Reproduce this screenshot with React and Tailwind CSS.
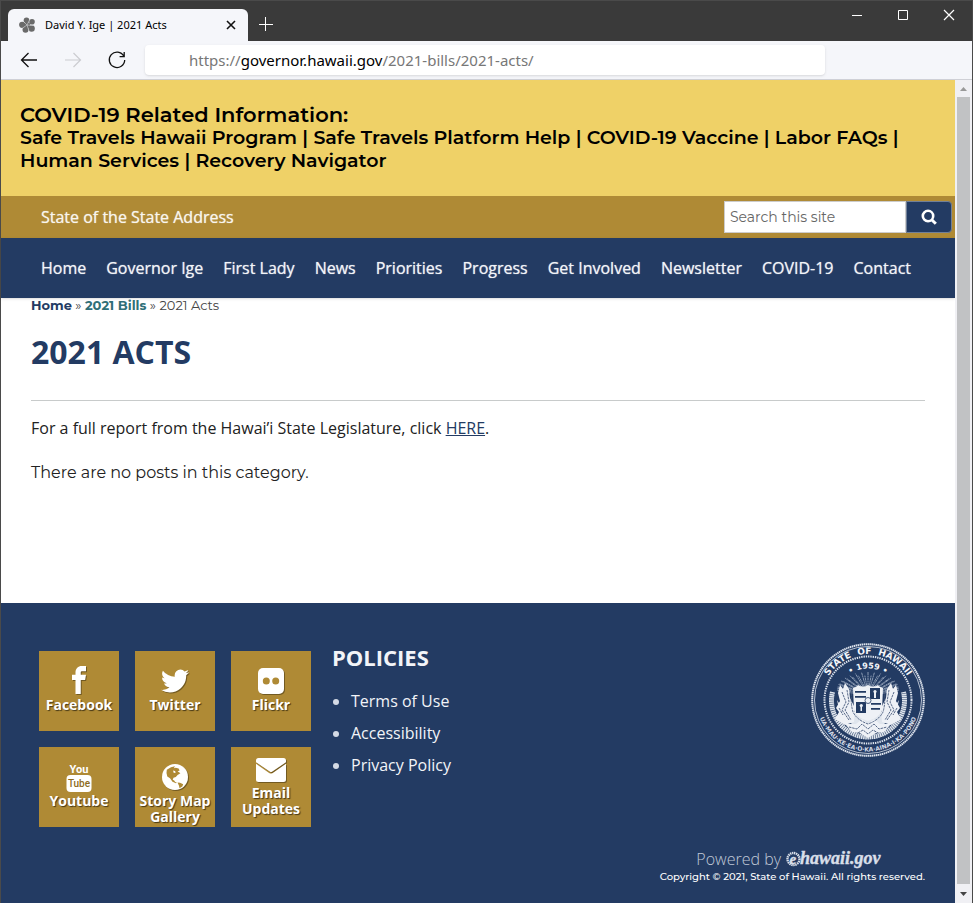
import React from "react";
import { ImFacebook } from "react-icons/im";

const navItems = ["Home", "Governor Ige", "First Lady", "News", "Priorities", "Progress", "Get Involved", "Newsletter", "COVID-19", "Contact"];
const covidLinks = ["Safe Travels Hawaii Program", "Safe Travels Platform Help", "COVID-19 Vaccine", "Labor FAQs", "Human Services", "Recovery Navigator"];
const policies = ["Terms of Use", "Accessibility", "Privacy Policy"];

function Hibiscus() {
  return (
    <svg viewBox="0 0 16 16" className="h-4 w-4 shrink-0 fill-[#6a6a6a]" aria-hidden="true">
      <circle cx="7.500" cy="3.300" r="2.800" />
      <circle cx="13" cy="4.800" r="2.800" />
      <circle cx="12.600" cy="11.500" r="3.200" />
      <circle cx="6.500" cy="12.800" r="3" />
      <circle cx="3.200" cy="7.800" r="3.100" />
      <circle cx="8.300" cy="8.200" r="3" />
      <path d="M8 8L3 11.500M8 8L10 14M8 8L14 8.500M8 8L10.500 3M8 8L4 4" stroke="#d5d6da" strokeWidth=".6" />
    </svg>
  );
}

function Chrome() {
  return (
    <header className="font-['Noto_Sans',sans-serif]">
      <div className="flex h-10 items-start bg-[#3a3a3a]">
        <div className="ml-[7px] mt-2 flex h-8 w-60 items-center rounded-t-md bg-[#f5f6fa] pl-[11px] pr-[11px] text-[11px] text-black">
          <Hibiscus />
          <span className="ml-[10px] grow whitespace-nowrap">David Y. Ige | 2021 Acts</span>
          <button aria-label="Close tab" className="flex h-3 w-3 items-center justify-center">
            <svg viewBox="0 0 10 10" className="h-[10px] w-[10px]" stroke="#111" strokeWidth="1.600"><path d="M1 1l8 8M9 1L1 9" /></svg>
          </button>
        </div>
        <button aria-label="New tab" className="ml-[10px] mt-[15px]">
          <svg viewBox="0 0 16 16" className="h-4 w-4" stroke="#fff"><path d="M7.500 1v14M1 8.500h14" /></svg>
        </button>
        <div className="ml-auto mr-[17px] mt-2 flex gap-[34px]">
          <button aria-label="Minimize"><svg viewBox="0 0 12 12" className="h-3 w-3" stroke="#fff"><path d="M1 6.500h10" /></svg></button>
          <button aria-label="Maximize"><svg viewBox="0 0 12 12" className="h-3 w-3" stroke="#fff" fill="none"><path d="M1.500 1.500h9v9h-9z" /></svg></button>
          <button aria-label="Close window"><svg viewBox="0 0 12 12" className="h-3 w-3" stroke="#fff" strokeWidth="1.200"><path d="M1 1l10 10M11 1L1 11" /></svg></button>
        </div>
      </div>
      <div className="flex h-[39px] items-center border-b border-[#cfd0d6] bg-[#f5f6fa]">
        <div className="flex w-36 shrink-0 items-center gap-6 pl-[18px]">
          <button aria-label="Back"><svg viewBox="0 0 20 20" className="h-5 w-5" fill="none" stroke="#111" strokeWidth="1.300"><path d="M18 10H2.500M9.500 3L2.500 10l7 7" /></svg></button>
          <button aria-label="Forward"><svg viewBox="0 0 20 20" className="h-5 w-5" fill="none" stroke="#cbccd0" strokeWidth="1.200"><path d="M2 10h15.500M10.500 3l7 7-7 7" /></svg></button>
          <button aria-label="Reload"><svg viewBox="0 0 20 20" className="h-5 w-5" fill="none" stroke="#111" strokeWidth="1.300"><path d="M16.800 6.200A7.700 7.700 0 1 0 17.700 10M17.200 2v4.600h-4.600" /></svg></button>
        </div>
        <a href="#" aria-label="Address" className="flex h-[30px] w-[680px] items-center rounded bg-white pl-11 text-[15px] text-[#777] shadow-sm">
          <span className="whitespace-nowrap">https://<span className="text-black">governor.hawaii.gov</span>/2021-bills/2021-acts/</span>
        </a>
      </div>
    </header>
  );
}

const twitterPath = "M1684 408q-67 98-162 167 1 14 1 42 0 130-38 259.500t-115.500 248.500-184.500 210.500-258 146-323 54.500q-271 0-496-145 35 4 78 4 225 0 401-138-105-2-188-64.500t-114-159.500q33 5 61 5 43 0 85-11-112-23-185.500-111.500t-73.500-205.500v-4q68 38 146 41-66-44-105-115t-39-154q0-88 44-163 121 149 294.500 238.500t371.500 99.500q-8-38-8-74 0-134 94.500-228.500t228.500-94.500q140 0 236 102 109-21 205-78-37 115-142 178 93-10 186-50z";

function TwitterIcon() {
  return (
    <svg viewBox="0 0 1792 1792" className="h-8 w-8 fill-white drop-shadow-[1px_1px_0_rgba(0,0,0,0.35)]" aria-hidden="true"><path d={twitterPath} /></svg>
  );
}

function FacebookIcon() {
  return (
    <span className="flex h-8 w-8 items-end justify-center pb-[3px]">
      <ImFacebook className="h-7 w-7 drop-shadow-[1px_1px_0_rgba(0,0,0,0.35)]" aria-hidden="true" />
    </span>
  );
}

function FlickrIcon() {
  return (
    <svg viewBox="0 0 32 32" className="h-8 w-8 drop-shadow-[1px_1px_0_rgba(0,0,0,0.35)]" aria-hidden="true">
      <rect x="3" y="3" width="26" height="26" rx="5" fill="#fff" />
      <circle cx="11.300" cy="16" r="3.500" fill="#af8a35" /><circle cx="20.700" cy="16" r="3.500" fill="#af8a35" />
    </svg>
  );
}

function YoutubeIcon() {
  return (
    <svg viewBox="0 0 32 32" className="h-8 w-8 [text-shadow:none]" fontFamily="Roboto, sans-serif" aria-hidden="true">
      <text x="16" y="12" textAnchor="middle" fontSize="11" fontWeight="700" fill="#fff">You</text>
      <rect x="3.500" y="14" width="25" height="17" rx="4" fill="#fff" />
      <text x="16" y="26" textAnchor="middle" fontSize="10" fontWeight="500" fill="#8d6b22">Tube</text>
    </svg>
  );
}

function GlobeIcon() {
  return (
    <span className="flex h-8 w-8 items-end justify-center pb-[3px]">
      <svg viewBox="0 0 26 26" className="h-[26px] w-[26px] drop-shadow-[1px_1px_0_rgba(0,0,0,0.35)]" aria-hidden="true">
        <circle cx="13" cy="13" r="13" fill="#fff" />
        <g fill="#af8a35">
          <path d="M4.800 5.800L9 3.200l4-1-1.200 2 2-.4 2.800.7 1 2-2 .8 2.800 1.900-2.800 1.800-1.800 2-2.300.8-.8 2 1.500.6 1 1.500 1.600.6-.8.800-3.500-1.500-2.500-3.500-2.700-1.800L4.500 9z" />
          <path d="M15.500 18.600l2.500.2 3.200 1.500-.9 2.200-2.800 1.800-.5-2.500z" />
        </g>
        <path d="M11 6.500l2 .5.800 1.500-2 .5z" fill="#fff" />
      </svg>
    </span>
  );
}

function MailIcon() {
  return (
    <svg viewBox="0 0 32 32" className="h-8 w-8 fill-white drop-shadow-[1px_1px_0_rgba(0,0,0,0.35)]" aria-hidden="true">
      <path d="M3.500 5h25Q31 5 31 7.500v1.700L17 18.700q-1 .8-2 0L1 9.200v-1.700Q1 5 3.500 5z" />
      <path d="M1 10.700l13.200 9.300q1.800 1.200 3.600 0L31 10.700V26.500q0 2.500-2.500 2.500h-25Q1 29 1 26.500z" />
    </svg>
  );
}

function Tile({ icon, lines, pad }) {
  return (
    <a href="#" className={`${pad} flex h-20 w-20 flex-col items-center bg-[#af8a35] text-center text-sm leading-4 font-bold text-white [text-shadow:1px_1px_1px_rgba(0,0,0,0.6)]`}>
      {icon}
      {lines.map((l) => <span key={l} className="whitespace-nowrap">{l}</span>)}
    </a>
  );
}

/* Rays, shield and supporters of the state seal, with its two rings of lettering. */
function Seal() {
  const rays = Array.from({ length: 31 }, (_, i) => Math.PI + (i * Math.PI) / 30);
  return (
    <svg viewBox="1 1 114 114" className="h-[114px] w-[114px] shrink-0" role="img" aria-label="State of Hawaii seal">
      <defs>
        <path id="sealTop" d="M12 58a46 46 0 0 1 92 0" />
        <path id="sealYear" d="M26.500 58a31.500 31.500 0 0 1 63 0" />
        <path id="sealBottom" d="M6.500 58a51.500 51.500 0 0 0 103 0" />
      </defs>
      <g fill="none" stroke="#dde3ed">
        <circle cx="58" cy="58" r="55.800" strokeWidth="2" strokeDasharray="1.500 .5" />
        <circle cx="58" cy="58" r="53.500" strokeWidth=".8" />
        <circle cx="58" cy="58" r="43.500" strokeWidth="2" strokeDasharray="1.400 .9" />
      </g>
      <g fill="#f4f6fa" fontFamily="DejaVu Sans, sans-serif" fontWeight="bold" textAnchor="middle">
        <text fontSize="9" className="whitespace-pre"><textPath href="#sealTop" startOffset="50%">STATE  OF  HAWAII</textPath></text>
        <text fontSize="8"><textPath href="#sealYear" startOffset="50%">• 1959 •</textPath></text>
        <text fontSize="6" fill="#d3dae6"><textPath href="#sealBottom" startOffset="50%">UA·MAU·KE·EA·O·KA·AINA·I·KA·PONO</textPath></text>
      </g>
      <g stroke="#b9c4d6" strokeWidth=".7" strokeDasharray="3 .5 1.500 .5">
        {rays.map((a, i) => <path key={i} d={`M${58 + 12 * Math.cos(a)} ${52 + 8 * Math.sin(a)}L${58 + 31 * Math.cos(a)} ${48 + (i % 2 ? 18 : 15) * Math.sin(a)}`} />)}
      </g>
      <path d="M22.500 50a36.500 36.500 0 1 0 71 0" fill="none" stroke="#dfe5ed" strokeWidth="5" strokeDasharray="1.600 .5" />
      <path d="M27 58q2 14 12 22 9 7 19 7t19-7q10-8 12-22l-8 12H35z" fill="#dfe5ed" />
      <g fill="#eef1f6">
        <path d="M30 43l3 4 2-6 4 6 1 9 5 10-1 14-9 3-10-6 4-7-3-4 4-7-2-8zM86 43l-3 4-2-6-4 6-1 9-5 10 1 14 9 3 10-6-4-7 3-4-4-7 2-8z" />
        <path d="M43 46q4-1 5-3 5 3 10 0 5 3 10 0 1 2 5 3l-1 22q-3 8-14 11-11-3-14-11z" />
        <path d="M35 82l11 0 6-5 6 5 6-5 6 5h11l-7 8-8 1-8 5-8-5-8-1z" />
      </g>
      <g fill="#233b63">
        <path d="M60 46h10v11H60zM46 60h10v11H46z" />
        <path d="M45 49h11v1.800H45zM45 54h11v1.800H45zM61 61h10v1.800H61zM61 66h9v1.800h-9z" />
      </g>
      <g fill="#eef1f6"><path d="M64 49h2v7h-2zM50.500 63h1.500v6h-1.500z" /><circle cx="65" cy="49.500" r="1.600" /><circle cx="51.300" cy="63.500" r="1.600" /><circle cx="58" cy="58.500" r="3" stroke="#233b63" strokeWidth=".8" /></g>
      <g stroke="#46597c" strokeWidth=".9" fill="none" strokeDasharray="2.500 .8">
        <path d="M32 50l4 10-4 8 7 10M37 48l2 12-4 8 6 10M84 50l-4 10 4 8-7 10M79 48l-2 12 4 8-6 10M42 48q-2 12 1 22 4 8 15 12 11-4 15-12 3-10 1-22M39 85l8 2 5-5 6 5 6-5 5 5 8-2M48 91l5-3 5 4 5-4 5 3M29 66l4 7M87 66l-4 7" />
      </g>
    </svg>
  );
}

function EHawaii() {
  return (
    <svg viewBox="0 0 98 22" className="h-[22px] w-[98px]" fill="#d9dfe9" role="img" aria-label="ehawaii.gov" fontFamily="Liberation Serif, serif" fontStyle="italic" fontWeight="bold">
      <circle cx="8.500" cy="11" r="6" fill="none" stroke="#d9dfe9" strokeWidth="2.400" strokeDasharray="1.400 .6" />
      <text x="4.500" y="15.500" fontSize="15" stroke="#d9dfe9" strokeWidth=".5">e</text>
      <text x="15" y="16" fontSize="18" stroke="#d9dfe9" strokeWidth=".4">hawaii.gov</text>
    </svg>
  );
}

function Scrollbar() {
  return (
    <div className="flex w-[17px] shrink-0 flex-col items-center bg-[#f0f0f4]" aria-hidden="true">
      <svg viewBox="0 0 17 17" className="h-[17px] w-[17px] shrink-0"><path d="M5 11h7L8.500 7z" fill="#999" /></svg>
      <div className="w-[13px] grow bg-[#c1c2c4]" />
      <svg viewBox="0 0 17 17" className="h-[19px] w-[17px] shrink-0"><path d="M5 7h7l-3.500 4z" fill="#444" /></svg>
    </div>
  );
}

export default function App() {
  return (
    <div className="flex min-h-screen flex-col border-x border-t border-[#4a4a4a] bg-white font-['Open_Sans',sans-serif]">
      <Chrome />
      <div className="flex grow">
        <div className="flex min-w-0 grow flex-col">
          <section className="bg-[#efd167] px-[19px] pt-6 pb-6 font-['Montserrat','Inter',sans-serif] font-semibold text-black">
            <h2 className="text-[21px] leading-[22px]">COVID-19 Related Information:</h2>
            <p className="text-[19px] leading-[23px]">
              {covidLinks.map((l, i) => (
                <React.Fragment key={l}>{i > 0 && " | "}<a href="#">{l}</a></React.Fragment>
              ))}
            </p>
          </section>
          <div className="flex h-[42px] items-center justify-between bg-[#af8a35] pl-10 pr-[3px]">
            <a href="#" className="text-base text-[#f8f5ee] [text-shadow:0_0_1px_rgba(255,255,255,0.7)]">State of the State Address</a>
            <form className="flex h-8">
              <input aria-label="Search this site" placeholder="Search this site" className="w-[182px] border border-[#ccc] bg-white px-[5px] font-['Montserrat','Inter',sans-serif] text-sm placeholder:text-[#666]" />
              <button type="button" aria-label="Search" className="flex w-[46px] items-center justify-center rounded-r-sm border border-[#718098] bg-[#233b63]">
                <svg viewBox="0 0 16 16" className="h-4 w-4" fill="none" stroke="#fff" strokeWidth="2.600"><circle cx="7" cy="7" r="5.200" /><path d="M10.500 10.500l4.300 4.300" strokeWidth="3" /></svg>
              </button>
            </form>
          </div>
          <nav className="flex h-[60px] items-center gap-5 bg-[#233b63] pl-10 text-base whitespace-nowrap text-[#f2f4f8] shadow [text-shadow:0_0_1px_rgba(255,255,255,0.7)]">
            {navItems.map((n) => <a key={n} href="#">{n}</a>)}
          </nav>
          <main className="grow px-[30px] text-[#222]">
            <p className="font-['Montserrat','Inter',sans-serif] text-[13px] leading-[14px] text-[#444]">
              <a href="#" className="font-bold text-[#233b63]">Home</a> » <a href="#" className="font-bold text-[#2f6f78]">2021 Bills</a> » 2021 Acts
            </p>
            <h1 className="mt-[18px] text-[32px] leading-[44px] font-bold text-[#233b63]">2021 ACTS</h1>
            <hr className="mt-[26px] border-[#c8cbcb]" />
            <p className="mt-4 text-base leading-[22px]">For a full report from the Hawai’i State Legislature, click <a href="#" className="text-[#233b63] underline">HERE</a>.</p>
            <p className="mt-[22px] font-['Montserrat','Inter',sans-serif] text-base leading-6">There are no posts in this category.</p>
          </main>
          <footer className="flex h-[300px] flex-col justify-between bg-[#233b63] pr-[30px] pb-[19px] pl-[38px] text-[#f2f4f8]">
            <div className="flex items-start">
              <div className="mt-12 grid shrink-0 grid-cols-3 gap-4">
                <Tile pad="pt-[14px]" icon={<FacebookIcon />} lines={["Facebook"]} />
                <Tile pad="pt-[14px]" icon={<TwitterIcon />} lines={["Twitter"]} />
                <Tile pad="pt-[14px]" icon={<FlickrIcon />} lines={["Flickr"]} />
                <Tile pad="pt-[14px]" icon={<YoutubeIcon />} lines={["Youtube"]} />
                <Tile pad="pt-[14px]" icon={<GlobeIcon />} lines={["Story Map", "Gallery"]} />
                <Tile pad="pt-[6px]" icon={<MailIcon />} lines={["Email", "Updates"]} />
              </div>
              <div className="mt-10 ml-[21px] grow">
                <h3 className="text-[22px] leading-7 font-bold">POLICIES</h3>
                <ul className="mt-[14px] list-disc pl-[19px] text-base leading-8 marker:text-[#d4dae5]">
                  {policies.map((p) => <li key={p}><a href="#">{p}</a></li>)}
                </ul>
              </div>
              <div className="mt-10"><Seal /></div>
            </div>
            <div className="flex flex-col items-end">
              <div className="mr-[42px] flex items-center gap-1 text-base leading-[22px] font-light text-[#c1cad8]">Powered by <EHawaii /></div>
              <p className="font-['Montserrat','Inter',sans-serif] text-[10px] leading-[14px] font-medium text-white">Copyright © 2021, State of Hawaii. All rights reserved.</p>
            </div>
          </footer>
        </div>
        <Scrollbar />
      </div>
    </div>
  );
}
